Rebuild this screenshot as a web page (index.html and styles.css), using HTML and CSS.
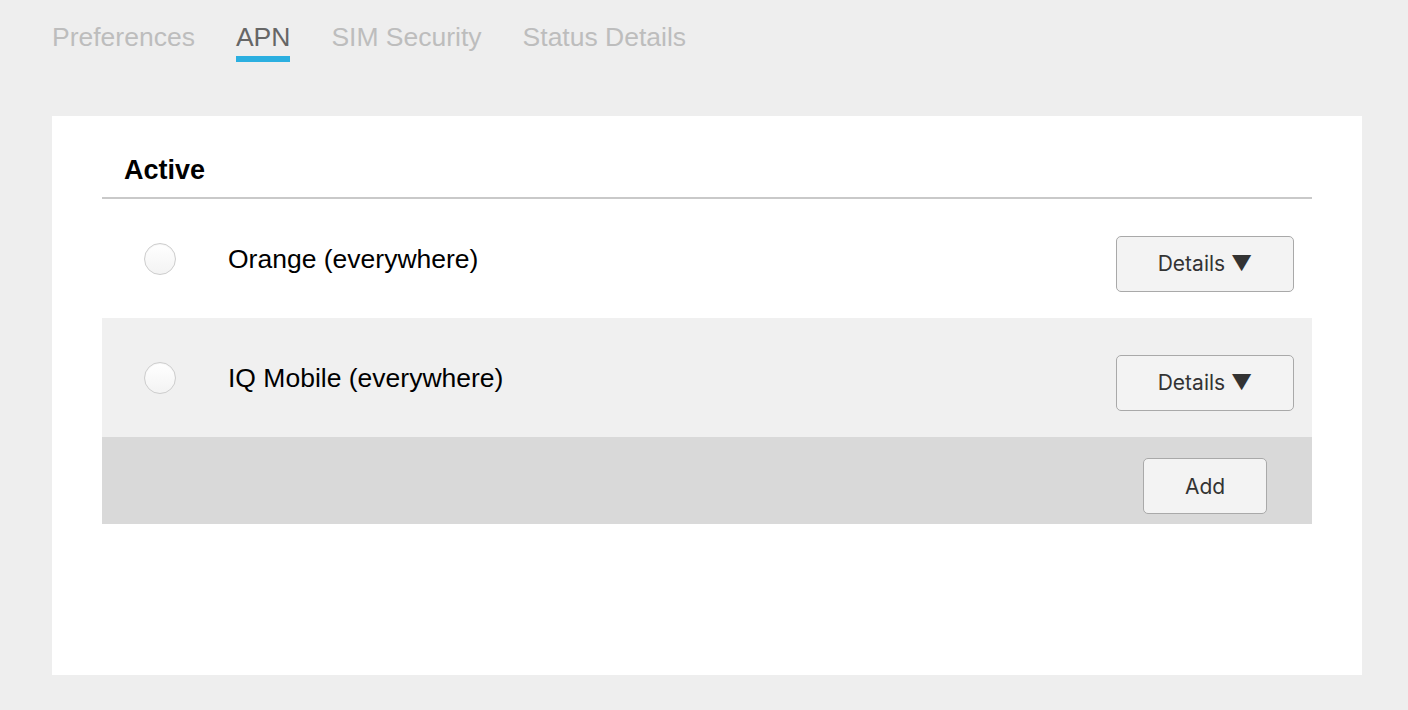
FILE: index.html
```html
<!DOCTYPE html>
<html lang="en">
<head>
<meta charset="utf-8">
<title>APN</title>
<link rel="stylesheet" href="styles.css">
</head>
<body>
<nav class="tabs">
  <span class="tab">Preferences</span>
  <span class="tab tab-active">APN</span>
  <span class="tab">SIM Security</span>
  <span class="tab">Status Details</span>
</nav>
<main class="card">
  <div class="list-head">Active</div>
  <div class="row">
    <span class="radio"></span>
    <span class="name">Orange (everywhere)</span>
    <button class="btn btn-details">Details ▼</button>
  </div>
  <div class="row row-alt">
    <span class="radio"></span>
    <span class="name">IQ Mobile (everywhere)</span>
    <button class="btn btn-details">Details ▼</button>
  </div>
  <div class="list-foot">
    <button class="btn btn-add">Add</button>
  </div>
</main>
</body>
</html>
```

FILE: styles.css
```css
html, body {
  margin: 0;
  padding: 0;
}
body {
  background: #eeeeee;
  font-family: "Liberation Sans", Arial, sans-serif;
  color: #000;
  width: 1408px;
  height: 710px;
  overflow: hidden;
}
.tabs {
  display: flex;
  gap: 41px;
  padding: 0 52px;
}
.tab {
  font-size: 26.5px;
  line-height: 30px;
  padding-top: 22px;
  padding-bottom: 4px;
  border-bottom: 6px solid transparent;
  color: #bdbdbd;
}
.tab-active {
  color: #666666;
  border-bottom-color: #2bafe0;
}
.card {
  display: block;
  background: #ffffff;
  margin: 54px 46px 0 52px;
  padding: 0 50px 151px;
}
.list-head {
  font-size: 27px;
  line-height: 30px;
  font-weight: bold;
  padding: 39px 22px 12px;
  border-bottom: 2px solid #c9c9c9;
}
.row {
  display: flex;
  align-items: center;
  height: 119px;
  padding-left: 42px;
  padding-right: 18px;
}
.row-alt {
  background: #f0f0f0;
}
.radio {
  width: 30px;
  height: 30px;
  border-radius: 50%;
  border: 1px solid #cdcdcd;
  background: linear-gradient(#ffffff, #f3f3f3);
  box-shadow: inset 0 1px 1px rgba(0,0,0,0.04);
  flex: none;
}
.name {
  font-size: 26.5px;
  line-height: 30px;
  margin-left: 52px;
  flex: 1;
}
.btn {
  font-family: Inter, "Liberation Sans", sans-serif;
  font-size: 21px;
  color: #333333;
  background: #f3f3f3;
  border: 1.5px solid #a9a9a9;
  border-radius: 5px;
  height: 56px;
  padding: 0;
}
.btn-details {
  width: 178px;
  margin-top: 10px;
}
.list-foot {
  display: flex;
  justify-content: flex-end;
  background: #d9d9d9;
  padding: 21px 45px 10px 0;
}
.btn-add {
  width: 124px;
}
```
